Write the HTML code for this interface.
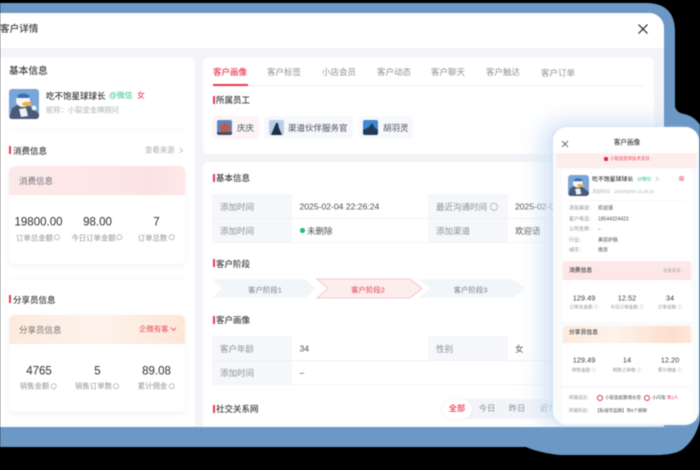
<!DOCTYPE html>
<html lang="zh"><head><meta charset="utf-8"><title>客户详情</title>
<style>
*{box-sizing:border-box;margin:0;padding:0}
html,body{width:700px;height:470px;overflow:hidden;background:#000}
body{font-family:"Liberation Sans","Noto Sans CJK SC",sans-serif;position:relative}
#w{position:absolute;inset:0;filter:blur(.45px)}
.a,.t,.c{position:absolute;white-space:nowrap;line-height:1}
.t{transform:translateY(-50%)}
.c{transform:translate(-50%,-50%)}
.b{font-weight:500}
.bar{position:absolute;width:2px;height:8px;background:#e8384f}
.lb{color:#8b9097}.v{color:#4a4e55}.r{color:#e8384f}
.num{color:#2b2e33;font-size:11.5px}
.sm{color:#8f949b;font-size:7.4px}
.i{display:inline-block;width:6px;height:6px;border:.6px solid #b8bcc3;border-radius:50%;margin-left:1px;vertical-align:-.5px}
.box{position:absolute;background:#fff}
.cell{position:absolute;background:#f5f7fa}
.line{position:absolute;background:#eef0f4}
svg{position:absolute;display:block}
</style></head><body><div id="w">
<svg style="left:0;top:0" width="700" height="470"><path d="M0 3H646Q675 3 675 32V107Q677 113 684 114Q694 116 700 125V420Q696 438 684 448Q678 454 660 455H560Q540 453 526 447H0Z" fill="#6c98c6"/></svg>

<div class="box" style="left:0;top:13px;width:664px;height:414px;border-top-right-radius:15px;background:#f3f4f8;overflow:hidden">
  <div style="height:35px;background:#fff"></div>
</div>
<div class="t b" style="left:0;top:30px;font-size:9.6px;color:#3b3e44">客户详情</div>
<svg style="left:637px;top:23px" width="12" height="12"><path d="M1.5 1.5L10.5 10.5M10.5 1.5L1.5 10.5" stroke="#222" stroke-width="1.2"/></svg>

<!-- left -->
<div class="box" style="left:0;top:57px;width:195px;height:370px;border-radius:0 6px 0 0"></div>
<div class="t b" style="left:9px;top:72px;font-size:9.7px;color:#3a3d42">基本信息</div>
<svg style="left:9px;top:89px;border-radius:3px" width="30" height="30" viewBox="0 0 30 30"><rect width="30" height="30" fill="#7aa5d8"/><path d="M0 30L3 19L12 14L22 18L30 25V30Z" fill="#4a5a78"/><ellipse cx="14" cy="12" rx="7" ry="6" fill="#f6f6f2"/><path d="M8 7Q14 2 21 7L19 9H9Z" fill="#3a6cb0"/><ellipse cx="18" cy="15" rx="5" ry="2.2" fill="#eeb04a"/><path d="M10 20L17 19L19 27L12 28Z" fill="#eef1f4"/><circle cx="25" cy="19" r="2.4" fill="#f2f2f2"/></svg>
<div class="t b" style="left:46px;top:96px;font-size:8.5px;color:#33363b">吃不饱星球球长</div>
<div class="t" style="left:109px;top:96px;font-size:7.8px;color:#39c48a">@微信</div>
<div class="t" style="left:137px;top:96px;font-size:8px;color:#e8384f">女</div>
<div class="t" style="left:46px;top:109.5px;font-size:7.3px;color:#adb1b7">昵称：小裂变金牌顾问</div>
<div class="line" style="left:9px;top:129px;width:176px;height:1px;background:#f6f7f9"></div>

<div class="bar" style="left:9px;top:146px"></div>
<div class="t b" style="left:13px;top:150.5px;font-size:8.5px;color:#3a3d42">消费信息</div>
<div class="t" style="left:145px;top:150px;font-size:7.4px;color:#a9adb3">查看来源</div>
<svg style="left:178px;top:147px" width="6" height="7"><path d="M1.5 1L4.5 3.5L1.5 6" stroke="#b5b8bd" fill="none" stroke-width=".8"/></svg>

<div class="box" style="left:9px;top:166px;width:176px;height:98px;border-radius:6px;box-shadow:0 2px 6px rgba(120,130,150,.1)"></div>
<div class="box" style="left:9px;top:166px;width:176px;height:29px;border-radius:6px 6px 0 0;background:linear-gradient(90deg,#fde9e9,#fde6e6 60%,#fce3e3 80%,#fde8e8)"></div>
<div class="t" style="left:19px;top:181px;font-size:8.5px;color:#6d7076">消费信息</div>
<div class="c num" style="left:38.5px;top:223px">19800.00</div>
<div class="c num" style="left:97.5px;top:223px">98.00</div>
<div class="c num" style="left:156.5px;top:223px">7</div>
<div class="c sm" style="left:38px;top:237.5px">订单总金额<span class="i"></span></div>
<div class="c sm" style="left:97px;top:237.5px">今日订单金额<span class="i"></span></div>
<div class="c sm" style="left:156px;top:237.5px">订单总数<span class="i"></span></div>
<div class="line" style="left:9px;top:278px;width:176px;height:1px;background:#f6f7f9"></div>

<div class="bar" style="left:9px;top:295px"></div>
<div class="t b" style="left:13px;top:299.5px;font-size:8.5px;color:#3a3d42">分享员信息</div>
<div class="box" style="left:9px;top:315px;width:176px;height:97px;border-radius:6px;box-shadow:0 2px 6px rgba(120,130,150,.1)"></div>
<div class="box" style="left:9px;top:315px;width:176px;height:29px;border-radius:6px 6px 0 0;background:linear-gradient(90deg,#fdeadd,#fef3ec 50%,#fde6d8)"></div>
<div class="t" style="left:19px;top:330px;font-size:8.5px;color:#6d7076">分享员信息</div>
<div class="t" style="left:139px;top:329px;font-size:7.4px;color:#e8485a">企微有客</div>
<svg style="left:170px;top:326px" width="7" height="6"><path d="M.8 1.5L3.5 4.5L6.2 1.5" stroke="#e8485a" fill="none" stroke-width=".8"/></svg>
<div class="c num" style="left:39px;top:372px">4765</div>
<div class="c num" style="left:97.5px;top:372px">5</div>
<div class="c num" style="left:156.5px;top:372px">89.08</div>
<div class="c sm" style="left:38px;top:386px">销售金额<span class="i"></span></div>
<div class="c sm" style="left:97px;top:386px">销售订单数<span class="i"></span></div>
<div class="c sm" style="left:156px;top:386px">累计佣金<span class="i"></span></div>

<!-- right top -->
<div class="box" style="left:203px;top:57px;width:451px;height:97px;border-radius:6px"></div>
<div class="line" style="left:213px;top:85px;width:431px;height:1px"></div>
<div class="box" style="left:213px;top:84px;width:35px;height:1.5px;background:#e8384f"></div>
<div class="t b" style="left:213px;top:71.5px;font-size:8.5px;color:#e8384f">客户画像</div>
<div class="t lb" style="left:267px;top:71.5px;font-size:8.5px">客户标签</div>
<div class="t lb" style="left:322px;top:71.5px;font-size:8.5px">小店会员</div>
<div class="t lb" style="left:377px;top:71.5px;font-size:8.5px">客户动态</div>
<div class="t lb" style="left:431px;top:71.5px;font-size:8.5px">客户聊天</div>
<div class="t lb" style="left:486px;top:71.5px;font-size:8.5px">客户触达</div>
<div class="t lb" style="left:541px;top:72.5px;font-size:8.5px">客户订单</div>
<div class="bar" style="left:212.5px;top:96px"></div>
<div class="t b" style="left:216px;top:100px;font-size:8.5px;color:#3a3d42">所属员工</div>

<div class="box" style="left:213px;top:116px;width:46px;height:23px;border-radius:3px;background:#fdf5f5"></div>
<svg style="left:217px;top:120px;border-radius:2px" width="15" height="15"><rect width="15" height="15" fill="#5f86bd"/><circle cx="8" cy="8" r="5" fill="#b5604f"/><rect y="12" width="15" height="3" fill="#444c5e"/></svg>
<div class="t v" style="left:237px;top:128px;font-size:8.5px">庆庆</div>
<div class="box" style="left:264px;top:116px;width:89px;height:23px;border-radius:3px;background:#f6f8fc"></div>
<svg style="left:269px;top:120px;border-radius:2px" width="15" height="15"><rect width="15" height="15" fill="#b7cfe8"/><path d="M2 15L5 8L7 3H9L10 8L13 15Z" fill="#1f2f45"/></svg>
<div class="t v" style="left:288px;top:128px;font-size:8.5px">渠道伙伴服务官</div>
<div class="box" style="left:359px;top:116px;width:54px;height:23px;border-radius:3px;background:#f6f8fc"></div>
<svg style="left:363px;top:120px;border-radius:2px" width="15" height="15"><rect width="15" height="15" fill="#3f86d2"/><path d="M0 15L0 10L6 7L9 3L12 8L15 10V15Z" fill="#243a5c"/></svg>
<div class="t v" style="left:383px;top:128px;font-size:8.5px">胡羽灵</div>

<!-- right lower -->
<div class="box" style="left:203px;top:162px;width:451px;height:265px;border-radius:6px 6px 0 0"></div>
<div class="bar" style="left:212.5px;top:174px"></div>
<div class="t b" style="left:216px;top:178px;font-size:8.5px;color:#3a3d42">基本信息</div>

<div class="cell" style="left:212px;top:194px;width:80px;height:48px"></div>
<div class="cell" style="left:428px;top:194px;width:80px;height:48px"></div>
<div class="line" style="left:212px;top:218px;width:340px;height:1px"></div>
<div class="line" style="left:212px;top:242px;width:340px;height:1px;background:#f4f5f8"></div>
<div class="t lb" style="left:220px;top:206.5px;font-size:8.5px">添加时间</div>
<div class="t v" style="left:299.5px;top:206.5px;font-size:8.6px">2025-02-04 22:26:24</div>
<div class="t lb" style="left:436px;top:206.5px;font-size:8.5px">最近沟通时间<span class="i" style="width:8px;height:8px;margin-left:3px;vertical-align:-1px"></span></div>
<div class="t v" style="left:515px;top:206.5px;font-size:8.6px">2025-02-04</div>
<div class="t lb" style="left:220px;top:230.5px;font-size:8.5px">添加时间</div>
<div class="box" style="left:300px;top:228px;width:4.5px;height:4.5px;border-radius:50%;background:#1fbf83"></div>
<div class="t v" style="left:307px;top:230.5px;font-size:8.5px">未删除</div>
<div class="t lb" style="left:436px;top:230.5px;font-size:8.5px">添加渠道</div>
<div class="t v" style="left:515px;top:230.5px;font-size:8.5px">欢迎语</div>

<div class="bar" style="left:212.5px;top:259px"></div>
<div class="t b" style="left:216px;top:263.5px;font-size:8.5px;color:#3a3d42">客户阶段</div>
<svg style="left:210px;top:278px" width="320" height="21"><path d="M2 1H95L106 10.5L95 20H2L12 10.5Z" fill="#f3f6f9"/><path d="M107 1H200L212 10.5L200 20H107L118 10.5Z" fill="#fdeeee" stroke="#f6b9bf" stroke-width=".8"/><path d="M208 1H303L315 10.5L303 20H208L220 10.5Z" fill="#f3f6f9"/></svg>
<div class="c" style="left:265px;top:289.5px;font-size:7.4px;color:#7b8087">客户阶段1</div>
<div class="c" style="left:368px;top:289.5px;font-size:7.4px;color:#e8384f">客户阶段2</div>
<div class="c" style="left:470.5px;top:289.5px;font-size:7.4px;color:#7b8087">客户阶段3</div>

<div class="bar" style="left:212.5px;top:316px"></div>
<div class="t b" style="left:216px;top:320px;font-size:8.5px;color:#3a3d42">客户画像</div>
<div class="cell" style="left:212px;top:336px;width:80px;height:48px"></div>
<div class="cell" style="left:428px;top:336px;width:80px;height:24px"></div>
<div class="line" style="left:212px;top:360px;width:340px;height:1px"></div>
<div class="line" style="left:212px;top:384px;width:340px;height:1px;background:#f4f5f8"></div>
<div class="t lb" style="left:220px;top:348.5px;font-size:8.5px">客户年龄</div>
<div class="t v" style="left:299.5px;top:348.5px;font-size:8.6px">34</div>
<div class="t lb" style="left:436px;top:348.5px;font-size:8.5px">性别</div>
<div class="t v" style="left:515px;top:348.5px;font-size:8.5px">女</div>
<div class="t lb" style="left:220px;top:372.5px;font-size:8.5px">添加时间</div>
<div class="t v" style="left:299.5px;top:372.5px;font-size:8.6px">–</div>

<div class="bar" style="left:212.5px;top:405px"></div>
<div class="t b" style="left:216px;top:409px;font-size:8.5px;color:#3a3d42">社交关系网</div>
<div class="box" style="left:442px;top:399px;width:115px;height:20px;border-radius:10px;background:#f2f4f8"></div>
<div class="box" style="left:442px;top:399px;width:30px;height:20px;border-radius:10px;box-shadow:0 0 2px rgba(200,205,215,.4)"></div>
<div class="c b" style="left:457px;top:408.5px;font-size:8.2px;color:#e8384f">全部</div>
<div class="c lb" style="left:487px;top:408.5px;font-size:8.2px">今日</div>
<div class="c lb" style="left:517px;top:408.5px;font-size:8.2px">昨日</div>
<div class="t lb" style="left:540px;top:408.5px;font-size:8.2px">近7天</div>

<!-- soft glow around the phone, clipped to the white card -->
<div style="position:absolute;left:500px;top:90px;width:164px;height:337px;overflow:hidden">
  <div style="position:absolute;left:53px;top:37px;width:146px;height:298px;border-radius:14px;box-shadow:-6px 0 22px 6px rgba(208,225,246,.85)"></div>
</div>

<!-- phone -->
<div class="box" style="left:553px;top:127px;width:146px;height:298px;border-radius:14px;background:#f9fafc;box-shadow:0 0 3px rgba(190,210,235,.5)"></div>
<div class="box" style="left:553px;top:127px;width:146px;height:26px;border-radius:14px 14px 0 0"></div>
<svg style="left:561px;top:140px" width="8" height="8"><path d="M1 1L7 7M7 1L1 7" stroke="#444" stroke-width=".8"/></svg>
<div class="c b" style="left:627px;top:144px;font-size:6.6px;color:#3a3d42">客户画像</div>
<div class="box" style="left:556px;top:153px;width:141px;height:15px;background:#fdeeee"></div>
<div class="box" style="left:604px;top:157px;width:4px;height:4px;background:#d92c3f;border-radius:1px"></div>
<div class="t" style="left:610px;top:159px;font-size:4.4px;color:#e8485a">小裂变提供技术支持</div>

<div class="box" style="left:562px;top:169px;width:130px;height:92px;border-radius:3px"></div>
<svg style="left:568px;top:175px;border-radius:3px" width="21" height="21" viewBox="0 0 30 30"><rect width="30" height="30" fill="#7aa5d8"/><path d="M0 30L3 19L12 14L22 18L30 25V30Z" fill="#4a5a78"/><ellipse cx="14" cy="12" rx="7" ry="6" fill="#f6f6f2"/><path d="M8 7Q14 2 21 7L19 9H9Z" fill="#3a6cb0"/><ellipse cx="18" cy="15" rx="5" ry="2.2" fill="#eeb04a"/><path d="M10 20L17 19L19 27L12 28Z" fill="#eef1f4"/></svg>
<div class="t b" style="left:592px;top:181px;font-size:5.9px;color:#33363b">吃不饱星球球长</div>
<div class="t" style="left:637px;top:181px;font-size:4.8px;color:#39c48a">@微信</div>
<div class="t" style="left:655px;top:181px;font-size:4.8px;color:#f2b8bd">女</div>
<div class="box" style="left:679px;top:176px;width:5px;height:5px;background:#f5a8b0;border-radius:1px"></div>
<div class="t" style="left:592px;top:191.5px;font-size:4.4px;color:#adb1b7">添加时间：2024/02/04 22:26:24</div>
<div class="line" style="left:569px;top:200px;width:116px;height:1px;background:#f5f6f8"></div>
<div class="t lb" style="left:569px;top:209px;font-size:5px">添加渠道：</div><div class="t v" style="left:598px;top:209px;font-size:5px">欢迎语</div>
<div class="t lb" style="left:569px;top:219.5px;font-size:5px">客户电话：</div><div class="t v" style="left:598px;top:219.5px;font-size:5px">18544324423</div>
<div class="t lb" style="left:569px;top:230px;font-size:5px">公司名称：</div><div class="t v" style="left:598px;top:230px;font-size:5px">–</div>
<div class="t lb" style="left:569px;top:240.5px;font-size:5px">行业：</div><div class="t v" style="left:598px;top:240.5px;font-size:5px">美容护肤</div>
<div class="t lb" style="left:569px;top:250.5px;font-size:5px">城市：</div><div class="t v" style="left:598px;top:250.5px;font-size:5px">南京</div>

<div class="box" style="left:563px;top:261px;width:128px;height:19px;background:linear-gradient(180deg,#fdeaea,#fde3e4);border-radius:3px 3px 0 0"></div>
<div class="t b" style="left:569px;top:271.5px;font-size:5.8px;color:#3a3d42">消费信息</div>
<div class="t" style="left:663px;top:271px;font-size:4.4px;color:#a9adb3">查看来源 ›</div>
<div class="box" style="left:562px;top:280px;width:130px;height:42px"></div>
<div class="c" style="left:584px;top:297.5px;font-size:7.4px;color:#3a3d42">129.49</div>
<div class="c" style="left:627px;top:297.5px;font-size:7.4px;color:#3a3d42">12.52</div>
<div class="c" style="left:670px;top:297.5px;font-size:7.4px;color:#3a3d42">34</div>
<div class="c sm" style="left:584px;top:307.5px;font-size:4.6px">订单总金额 ⓘ</div>
<div class="c sm" style="left:627px;top:307.5px;font-size:4.6px">今日订单金额 ⓘ</div>
<div class="c sm" style="left:670px;top:307.5px;font-size:4.6px">订单总数 ⓘ</div>

<div class="box" style="left:563px;top:326px;width:128px;height:17px;background:linear-gradient(90deg,#fdeadd,#fef3ec 40%,#fcdfcc 85%,#fde7d8);border-radius:3px 3px 0 0"></div>
<div class="t b" style="left:569px;top:334px;font-size:5.8px;color:#3a3d42">分享员信息</div>
<div class="box" style="left:562px;top:343px;width:130px;height:42px"></div>
<div class="c" style="left:584px;top:360px;font-size:7.4px;color:#3a3d42">129.49</div>
<div class="c" style="left:627px;top:360px;font-size:7.4px;color:#3a3d42">14</div>
<div class="c" style="left:670px;top:360px;font-size:7.4px;color:#3a3d42">12.20</div>
<div class="c sm" style="left:584px;top:370.5px;font-size:4.6px">销售金额 ⓘ</div>
<div class="c sm" style="left:627px;top:370.5px;font-size:4.6px">销售订单数 ⓘ</div>
<div class="c sm" style="left:670px;top:370.5px;font-size:4.6px">累计佣金 ⓘ</div>

<div class="box" style="left:562px;top:388px;width:130px;height:35px;border-radius:3px"></div>
<div class="t lb" style="left:569px;top:397.5px;font-size:4.5px">所属成员：</div>
<div class="box" style="left:597px;top:394.5px;width:6px;height:6px;border-radius:50%;border:1.6px solid #d9303f"></div>
<div class="t v" style="left:605px;top:397.5px;font-size:4.5px">小裂变超算增长官</div>
<div class="box" style="left:644px;top:394.5px;width:6px;height:6px;border-radius:50%;border:1.6px solid #d9303f"></div>
<div class="t v" style="left:652px;top:397.5px;font-size:4.5px">小闪电 <span class="r">等2人</span></div>
<div class="t lb" style="left:569px;top:411px;font-size:4.5px">所属阶段：</div>
<div class="t v" style="left:595px;top:411px;font-size:4.5px">【私域市监群】等6个群聊</div>
</div></body></html>
